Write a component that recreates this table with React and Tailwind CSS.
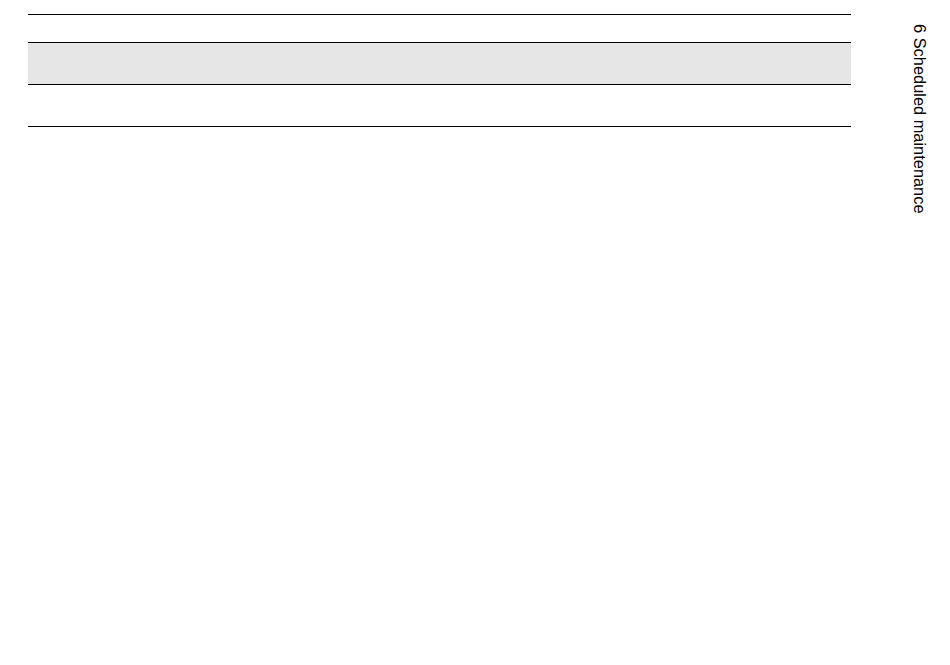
export default function App() {
  const rows = [
    { h: 'h-[28px]', bg: 'bg-white' },
    { h: 'h-[42px]', bg: 'bg-[#e6e6e6]' },
    { h: 'h-[42px]', bg: 'bg-white' },
  ];

  return (
    <div className="w-[950px] h-[665px] bg-white flex font-['Liberation_Sans',Arial,sans-serif] text-black">
      {/* Table */}
      <div className="ml-[28px] mt-[14px] w-[823px] flex flex-col border-b border-black self-start">
        {rows.map((r, i) => (
          <div key={i} className={`grid grid-cols-3 border-t border-black ${r.h} ${r.bg}`}>
            <div />
            <div />
            <div />
          </div>
        ))}
      </div>

      {/* Running section title */}
      <div className="ml-[60px] mt-[24px] self-start">
        <p className="[writing-mode:vertical-rl] text-[16.4px] leading-[18px] whitespace-nowrap">
          6 Scheduled maintenance
        </p>
      </div>
    </div>
  );
}
